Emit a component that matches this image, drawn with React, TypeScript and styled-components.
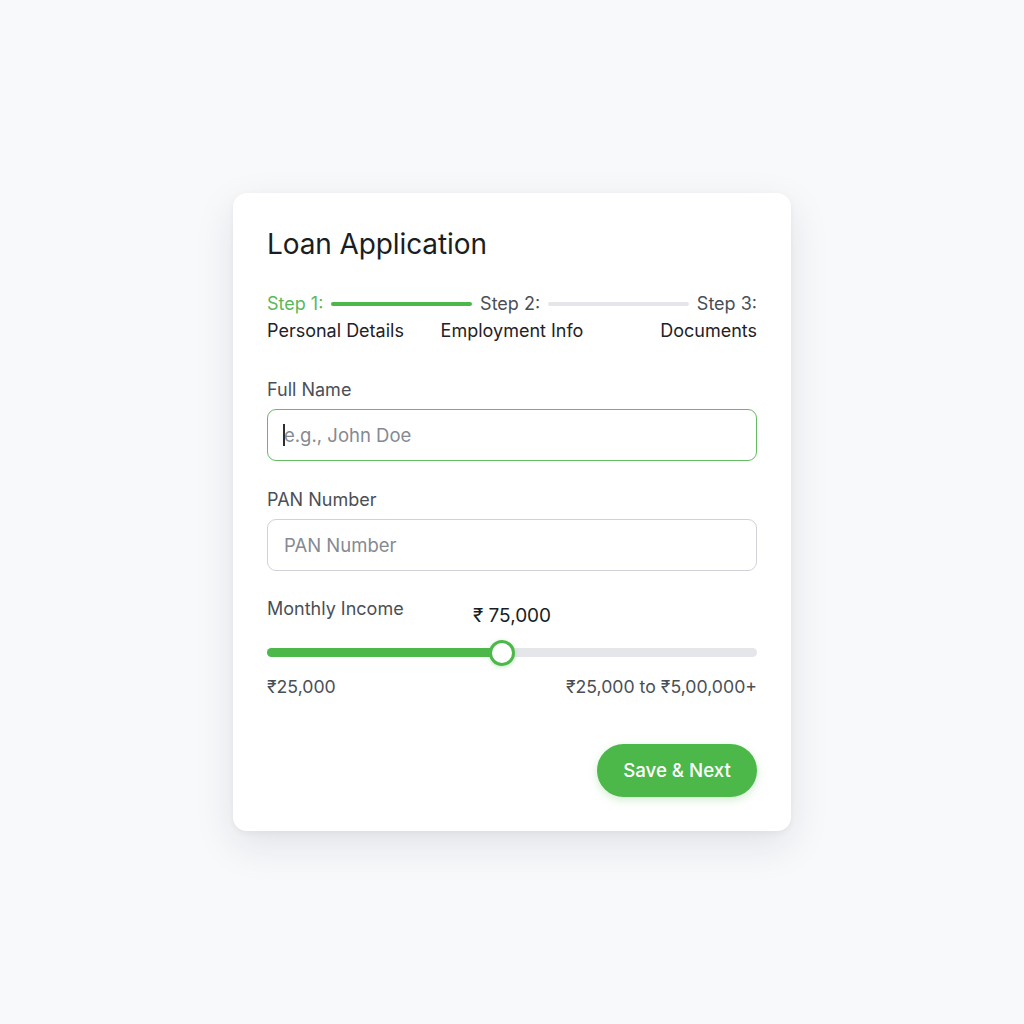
import React from 'react'
import styled, { createGlobalStyle } from 'styled-components'

const GlobalStyle = createGlobalStyle`
  html, body {
    margin: 0;
    padding: 0;
    background: #f8f9fb;
  }
  body {
    font-family: Inter, 'Noto Sans', 'Liberation Sans', sans-serif;
    color: #1c1f24;
  }
  * {
    box-sizing: border-box;
  }
`

const Page = styled.div`
  width: 1024px;
  height: 1024px;
  display: flex;
  align-items: center;
  justify-content: center;
`

const Card = styled.div`
  width: 558px;
  height: 638px;
  background: #ffffff;
  border-radius: 14px;
  padding: 34px 34px 34px;
  box-shadow: 0 14px 40px rgba(20, 30, 50, 0.10), 0 2px 6px rgba(20, 30, 50, 0.05);
  display: flex;
  flex-direction: column;
`

const Title = styled.h1`
  margin: 0;
  font-size: 28px;
  line-height: 34px;
  font-weight: 400;
  color: #1a1d22;
  letter-spacing: -0.1px;
`

const Stepper = styled.div`
  margin-top: 32px;
  display: flex;
  flex-direction: column;
  gap: 5px;
`

const StepRow = styled.div`
  display: flex;
  align-items: center;
  gap: 8px;
`

const StepName = styled.span<{ active?: boolean }>`
  font-size: 18px;
  line-height: 22px;
  color: ${({ active }) => (active ? '#5cb85a' : '#4a4f57')};
  white-space: nowrap;
`

const StepBar = styled.div<{ done?: boolean }>`
  flex: 1;
  height: 4px;
  border-radius: 2px;
  background: ${({ done }) => (done ? '#4cb84a' : '#e4e6ea')};
`

const StepLabels = styled.div`
  display: grid;
  grid-template-columns: 1fr auto 1fr;
  font-size: 18px;
  line-height: 22px;
  color: #1f2227;
`

const StepLabel = styled.span<{ align: 'left' | 'center' | 'right' }>`
  text-align: ${({ align }) => align};
  white-space: nowrap;
`

const Field = styled.div<{ gapTop: number }>`
  margin-top: ${({ gapTop }) => gapTop}px;
  display: flex;
  flex-direction: column;
  gap: 8px;
`

const Label = styled.label`
  font-size: 18px;
  line-height: 22px;
  color: #4a4f57;
`

const InputWrap = styled.div`
  position: relative;
`

const Input = styled.input<{ active?: boolean }>`
  width: 100%;
  height: 52px;
  padding: 0 16px;
  border-radius: 9px;
  border: ${({ active }) => (active ? '1.5px solid #64bd62' : '1px solid #cfd3d9')};
  font-family: inherit;
  font-size: 18.5px;
  color: #1f2227;
  caret-color: #1f2227;
  outline: none;
  background: #fff;

  &::placeholder {
    color: #858a92;
  }
`

const Caret = styled.span`
  position: absolute;
  left: 16px;
  top: 15px;
  width: 1.5px;
  height: 22px;
  background: #2a2d33;
`

const SliderBlock = styled.div`
  margin-top: 27px;
  display: flex;
  flex-direction: column;
`

const SliderHeader = styled.div`
  position: relative;
  height: 30px;
`

const SliderValue = styled.span`
  position: absolute;
  top: 6px;
  transform: translateX(-50%);
  font-size: 19px;
  line-height: 24px;
  color: #1a1d22;
  white-space: nowrap;
`

const Track = styled.div`
  position: relative;
  margin-top: 20px;
  height: 9px;
  border-radius: 5px;
  background: #e4e6ea;
`

const TrackFill = styled.div`
  height: 100%;
  border-radius: 5px;
  background: #4cb84a;
`

const Thumb = styled.div`
  position: absolute;
  top: 50%;
  width: 26px;
  height: 26px;
  border-radius: 50%;
  background: #fff;
  border: 3px solid #4cb84a;
  transform: translate(-50%, -50%);
  box-shadow: 0 1px 4px rgba(76, 184, 74, 0.35);
`

const RangeRow = styled.div`
  margin-top: 19px;
  display: flex;
  justify-content: space-between;
  font-size: 17.7px;
  line-height: 22px;
  color: #4a4f57;
`

const Footer = styled.div`
  margin-top: auto;
  display: flex;
  justify-content: flex-end;
`

const PrimaryButton = styled.button`
  width: 160px;
  height: 53px;
  border: none;
  border-radius: 27px;
  background: #4cb84a;
  color: #fff;
  font-family: inherit;
  font-size: 18.7px;
  font-weight: 500;
  box-shadow: 0 3px 8px rgba(76, 184, 74, 0.25);
  cursor: pointer;
`

export default function App() {
  const thumbPct = 48
  const valuePct = 50

  return (
    <Page>
      <GlobalStyle />
      <Card>
        <Title>Loan Application</Title>

        <Stepper>
          <StepRow>
            <StepName active>Step 1:</StepName>
            <StepBar done />
            <StepName>Step 2:</StepName>
            <StepBar />
            <StepName>Step 3:</StepName>
          </StepRow>
          <StepLabels>
            <StepLabel align="left">Personal Details</StepLabel>
            <StepLabel align="center">Employment Info</StepLabel>
            <StepLabel align="right">Documents</StepLabel>
          </StepLabels>
        </Stepper>

        <Field gapTop={37}>
          <Label>Full Name</Label>
          <InputWrap>
            <Input active placeholder="e.g., John Doe" />
            <Caret />
          </InputWrap>
        </Field>

        <Field gapTop={28}>
          <Label>PAN Number</Label>
          <Input placeholder="PAN Number" />
        </Field>

        <SliderBlock>
          <SliderHeader>
            <Label>Monthly Income</Label>
            <SliderValue style={{ left: `${valuePct}%` }}>₹ 75,000</SliderValue>
          </SliderHeader>
          <Track>
            <TrackFill style={{ width: `${thumbPct}%` }} />
            <Thumb style={{ left: `${thumbPct}%` }} />
          </Track>
          <RangeRow>
            <span>₹25,000</span>
            <span>₹25,000 to ₹5,00,000+</span>
          </RangeRow>
        </SliderBlock>

        <Footer>
          <PrimaryButton>Save &amp; Next</PrimaryButton>
        </Footer>
      </Card>
    </Page>
  )
}
